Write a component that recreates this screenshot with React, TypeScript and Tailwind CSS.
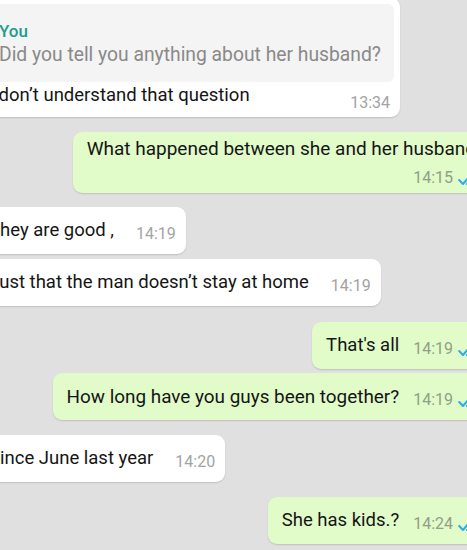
import React from "react";

const Check = () => (
  <svg width="18" height="12" viewBox="0 0 18 12" className="shrink-0 ml-[5px] mb-[2px]">
    <path d="M1.2 6 L5 10 L12.2 1.8" fill="none" stroke="#34abe4" strokeWidth="2.1" strokeLinecap="round" strokeLinejoin="round" />
    <path d="M9 10 L16.2 1.8" fill="none" stroke="#34abe4" strokeWidth="2.1" strokeLinecap="round" strokeLinejoin="round" />
  </svg>
);

const In = ({ text, time, mt }: { text: string; time: string; mt: string }) => (
  <div className={`self-start ml-[-24px] bg-white rounded-[9px] shadow-[0_1px_1.5px_rgba(0,0,0,0.14)] flex items-end pl-[13px] pr-[10px] py-[10px] ${mt}`}>
    <span className="text-[18.5px] leading-[27px] text-[#151515] whitespace-nowrap">{text}</span>
    <span className="ml-[22px] text-[16px] leading-[20px] text-[#a3a3a3] whitespace-nowrap">{time}</span>
  </div>
);

const Out = ({ text, time, mt, big }: { text: string; time: string; mt: string; big?: boolean }) => (
  <div className={`self-end mr-[-17px] bg-[#e1fbc9] rounded-[9px] shadow-[0_1px_1.5px_rgba(0,0,0,0.14)] flex items-end pl-[14px] pr-[8px] py-[10px] ${mt}`}>
    <span className={`${big ? "text-[18.9px]" : "text-[18.5px]"} leading-[27px] text-[#151515] whitespace-nowrap`}>{text}</span>
    <span className="ml-[14px] flex items-end">
      <span className="text-[16px] leading-[20px] text-[#8f9f88] whitespace-nowrap">{time}</span>
      <Check />
    </span>
  </div>
);

export default function App() {
  return (
    <div className="w-[467px] h-[550px] overflow-hidden bg-[#e0e0e0] flex flex-col font-['Roboto',sans-serif]">
      {/* Bubble with quote */}
      <div className="self-start ml-[-24px] mt-[-2px] w-[424px] bg-white rounded-[9px] shadow-[0_1px_1.5px_rgba(0,0,0,0.14)] pt-[6px] px-[6px] pb-[8px] flex flex-col">
        <div className="bg-[#f4f4f4] rounded-[6px] flex overflow-hidden h-[78px]">
          <div className="w-[4px] bg-[#1b9e8d] shrink-0" />
          <div className="pl-[13px] pt-[16px] flex flex-col">
            <span className="text-[17px] leading-[22px] font-medium text-[#1b9e8d]">You</span>
            <span className="text-[19.3px] leading-[25px] text-[#898989] whitespace-nowrap">Did you tell you anything about her husband?</span>
          </div>
        </div>
        <div className="flex items-end pl-[7px] pr-[4px]">
          <span className="text-[18.5px] leading-[27px] text-[#151515] whitespace-nowrap">I don’t understand that question</span>
          <span className="ml-auto mb-[-4px] text-[16px] leading-[20px] text-[#a3a3a3]">13:34</span>
        </div>
      </div>

      {/* Two-line outgoing */}
      <div className="self-end mr-[-17px] mt-[15px] bg-[#e1fbc9] rounded-[9px] shadow-[0_1px_1.5px_rgba(0,0,0,0.14)] pl-[14px] pr-[8px] pt-[5px] pb-[5px] flex flex-col">
        <span className="text-[19px] leading-[24px] text-[#151515] whitespace-nowrap">What happened between she and her husband</span>
        <span className="mt-[7px] self-end flex items-end">
          <span className="text-[16px] leading-[20px] text-[#8f9f88]">14:15</span>
          <Check />
        </span>
      </div>

      <In text="They are good ," time="14:19" mt="mt-[14px]" />
      <In text="Just that the man doesn’t stay at home" time="14:19" mt="mt-[5px]" />
      <Out text="That's all" time="14:19" mt="mt-[16px]" />
      <Out text="How long have you guys been together?" time="14:19" mt="mt-[4px]" big />
      <In text="Since June last year" time="14:20" mt="mt-[15px]" />
      <Out text="She has kids.?" time="14:24" mt="mt-[15px]" />
    </div>
  );
}
